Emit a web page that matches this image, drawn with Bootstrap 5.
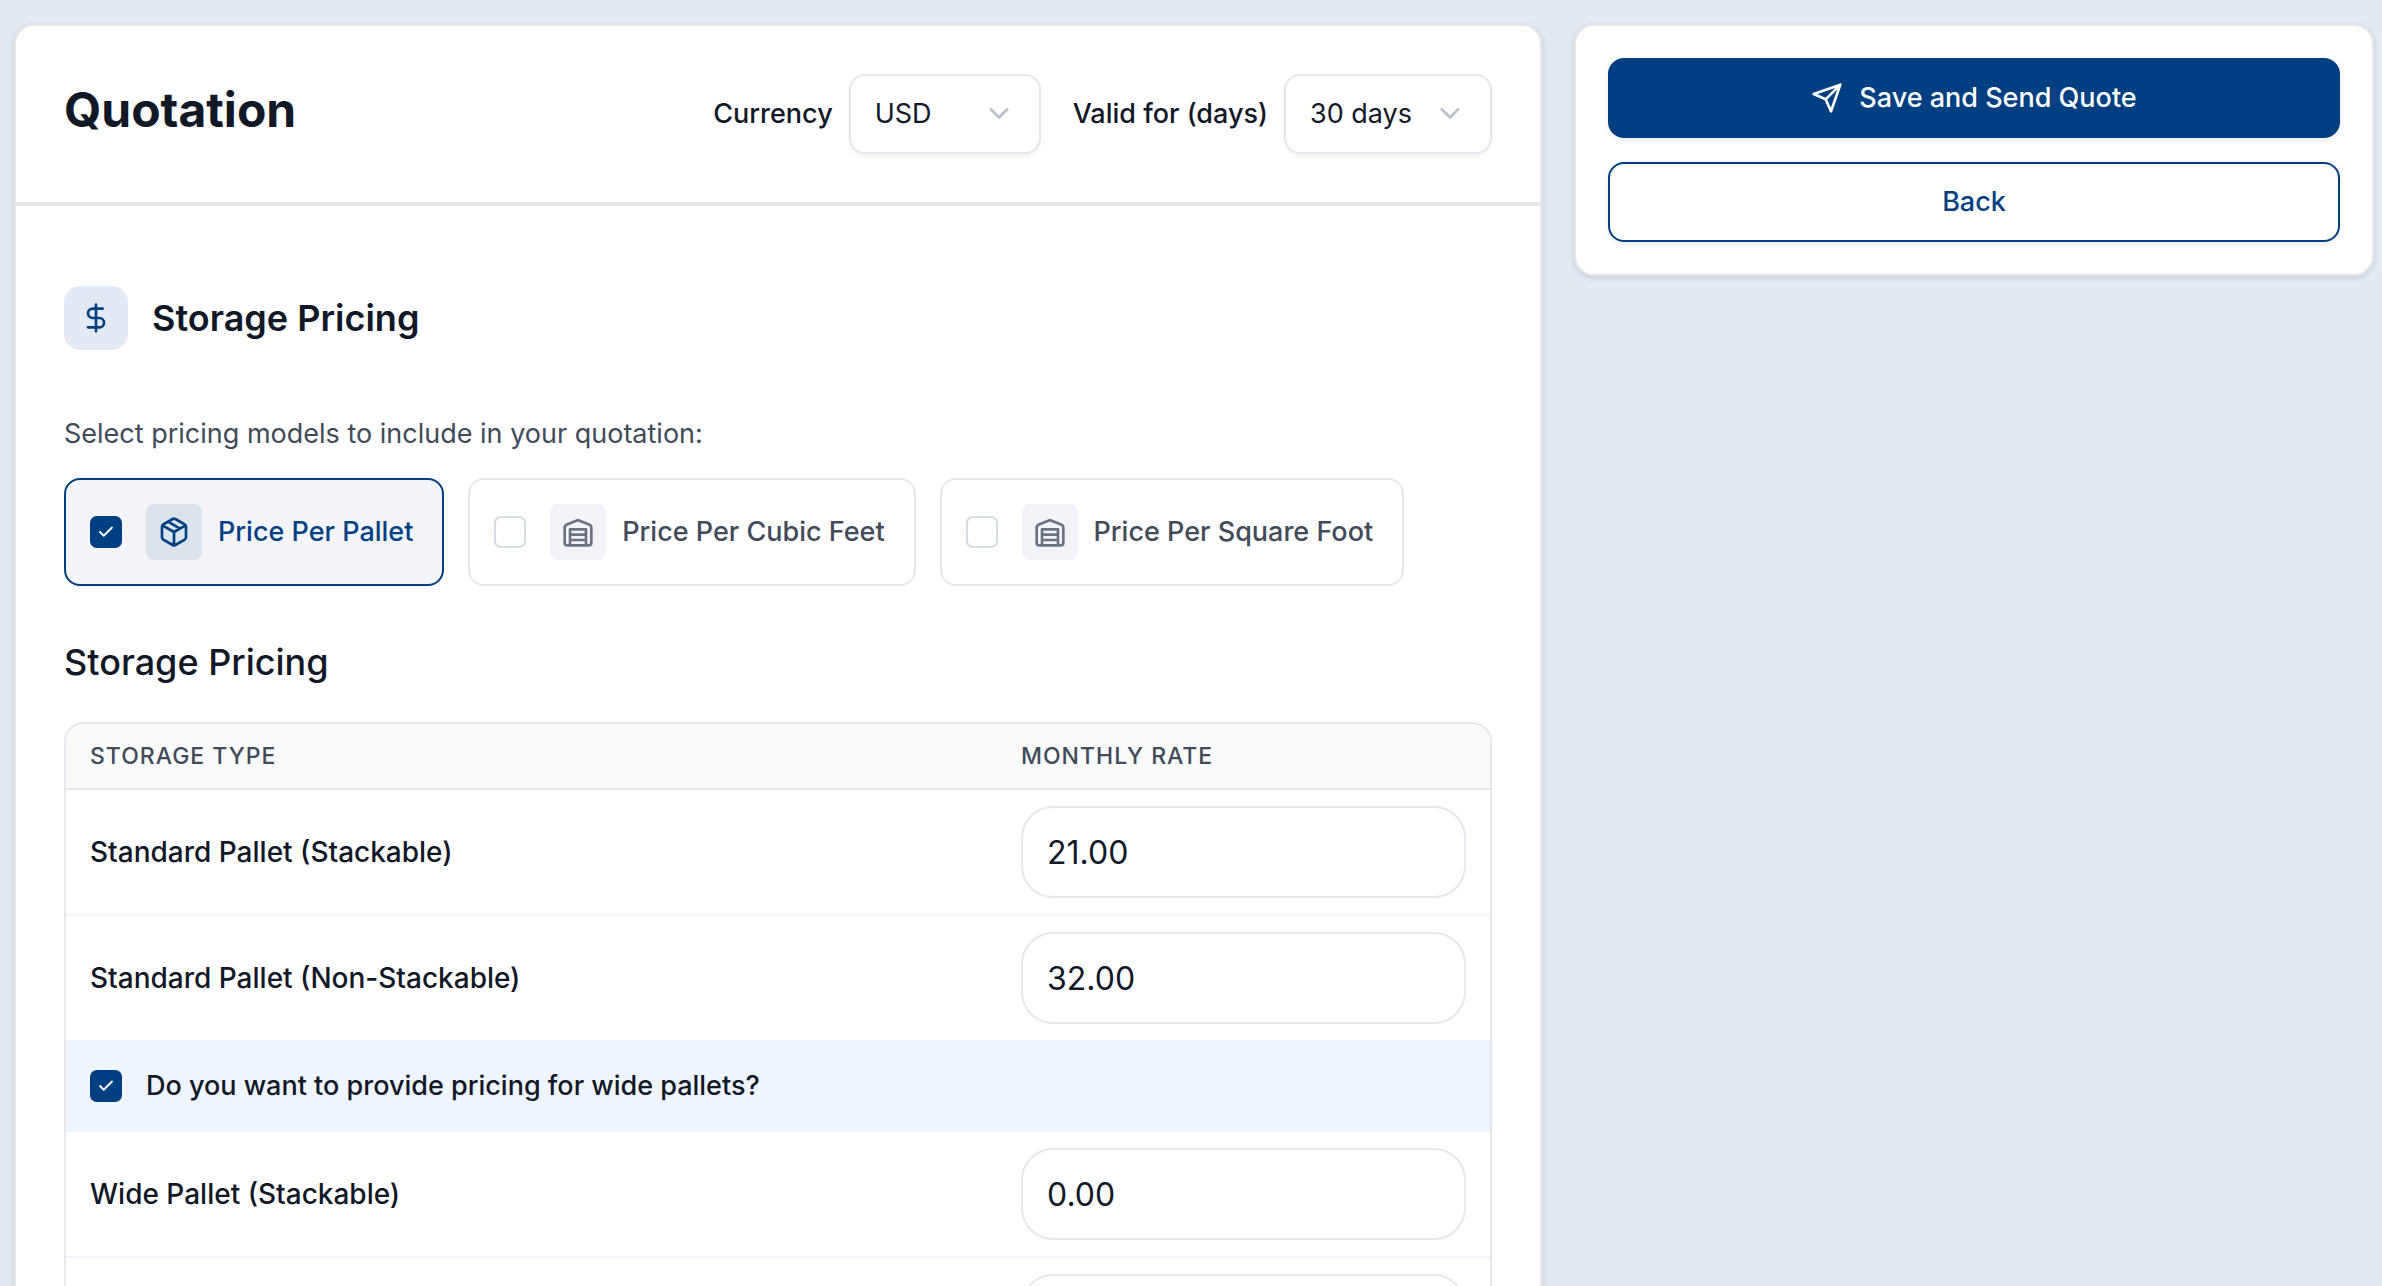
<!DOCTYPE html>
<html lang="en">
<head>
<meta charset="utf-8">
<meta name="viewport" content="width=device-width, initial-scale=1">
<title>Quotation</title>
<link href="https://cdn.jsdelivr.net/npm/bootstrap@5.3.0/dist/css/bootstrap.min.css" rel="stylesheet">
<style>
:root{--navy:#003f82;--ink:#111827;--slate:#414b5a;--line:#e5e7eb}
body{background:#e3eaf2;color:var(--ink);font-family:Inter,"Liberation Sans",sans-serif;font-size:28px;line-height:40px}
.page{display:grid;grid-template-columns:191fr 100fr;align-items:start;gap:32px;padding:24px 8px 24px 14px;height:100vh;overflow-y:auto;scrollbar-width:none}
.page::-webkit-scrollbar{display:none}
.panel{min-width:0;background:#fff;border:2px solid #e5e7ea;border-radius:20px;box-shadow:0 2px 6px rgba(30,50,80,.16)}
.panel-head{padding:48px;border-bottom:4px solid #e5e7ea}
h1{font-size:48px;line-height:72px;font-weight:700}
h2{font-size:36px;line-height:56px;font-weight:600}
h3{font-size:36px;line-height:56px;font-weight:500}
.fields{gap:32px}
.field{gap:16px}
.field label{font-size:27px;font-weight:500}
.form-select{height:80px;padding:0 72px 0 24px;border:2px solid var(--line);border-radius:16px;font-size:27px;line-height:40px;color:var(--ink);box-shadow:0 2px 4px rgba(0,0,0,.05);background-size:28px 28px;background-position:right 26px center;
background-image:url("data:image/svg+xml,%3Csvg xmlns='http://www.w3.org/2000/svg' viewBox='0 0 24 24' fill='none' stroke='%23bcc2cc' stroke-width='2.4' stroke-linecap='round' stroke-linejoin='round'%3E%3Cpath d='m5 8 7 7 7-7'/%3E%3C/svg%3E")}
.sel-currency{width:192px}
.sel-days{width:208px}
.panel-body{padding:80px 48px 48px}
.tile-lg{width:64px;height:64px;border-radius:16px;background:#e3eaf3;color:var(--navy)}
.tile-md{width:56px;height:56px;border-radius:8px;background:#f3f4f9;color:#6b7280;margin-right:16px}
.hint{margin:64px 0 24px;font-size:27px;color:var(--slate)}
.options{max-width:1340px}
.option{flex:1 1 auto;height:108px;padding:0 24px;border:2px solid var(--line);border-radius:16px;font-size:27px;font-weight:500;color:var(--slate);cursor:pointer;white-space:nowrap}
.option:has(:checked){border-color:var(--navy);background:#f3f5fa;color:var(--navy)}
.option:has(:checked) .tile-md{background:#dbe3eb;color:var(--navy)}
.form-check-input{width:32px;height:32px;margin:0 24px 0 0;border:2px solid #d5dce4;border-radius:8px;flex:none}
.form-check-input:checked{background-color:var(--navy);border-color:var(--navy)}
.form-check-input:checked[type=checkbox]{background-size:18px 18px;background-image:url("data:image/svg+xml,%3Csvg xmlns='http://www.w3.org/2000/svg' viewBox='0 0 24 24' fill='none' stroke='%23fff' stroke-width='2.4' stroke-linecap='round' stroke-linejoin='round'%3E%3Cpath d='M20 6 9 17l-5-5'/%3E%3C/svg%3E")}
.rates{border:2px solid var(--line);border-radius:20px;overflow:hidden}
.rates table{width:100%;table-layout:fixed;border-collapse:separate;border-spacing:0}
.rates th{font-size:23px;line-height:32px;font-weight:500;letter-spacing:1px;text-transform:uppercase;color:var(--slate);background:#f9fbfb;padding:16px 24px;border-bottom:2px solid var(--line)}
.rates td{padding:16px 24px;border-bottom:2px solid #f3f4f8;font-weight:500}
.rates .before-ask td{border-color:#eef5fe}
.rates .ask td{background:#eef5fe;padding:24px;border-color:#eef3fa;font-size:27px}
.rate-col{width:493px}
.rates .form-control{height:92px;border:2px solid var(--line);border-radius:32px;padding:0 24px;font-size:32px;color:var(--ink)}
.actions{padding:32px;gap:24px}
.actions .btn{height:80px;border-radius:16px;border:2px solid var(--navy);font-size:27px;font-weight:500;gap:16px;box-shadow:0 2px 6px rgba(0,0,0,.08)}
.btn-send,.btn-send:hover{background:var(--navy);color:#fff}
.btn-back,.btn-back:hover{background:#fff;color:var(--navy)}
svg{width:32px;height:32px;fill:none;stroke:currentColor;stroke-width:2;stroke-linecap:round;stroke-linejoin:round;flex:none}
</style>
</head>
<body>
<div class="page">
<main class="panel">
<header class="panel-head d-flex justify-content-between align-items-start">
<h1 class="m-0">Quotation</h1>
<div class="fields d-flex">
<div class="field d-flex align-items-center"><label class="text-nowrap" for="currency">Currency</label>
<select id="currency" class="form-select sel-currency"><option>USD</option></select></div>
<div class="field d-flex align-items-center"><label class="text-nowrap" for="days">Valid for (days)</label>
<select id="days" class="form-select sel-days"><option>30 days</option></select></div>
</div>
</header>
<section class="panel-body">
<div class="d-flex align-items-center gap-4">
<span class="tile-lg d-flex align-items-center justify-content-center"><svg viewBox="0 0 24 24" aria-hidden="true"><path d="M12 2v20M17 5H9.5a3.5 3.5 0 0 0 0 7h5a3.5 3.5 0 0 1 0 7H6"/></svg></span>
<h2 class="m-0">Storage Pricing</h2>
</div>
<p class="hint">Select pricing models to include in your quotation:</p>
<div class="options d-flex gap-4">
<label class="option d-flex align-items-center"><input class="form-check-input" type="checkbox" checked><span class="tile-md d-flex align-items-center justify-content-center"><svg viewBox="0 0 24 24" aria-hidden="true"><path d="M11 21.73a2 2 0 0 0 2 0l7-4A2 2 0 0 0 21 16V8a2 2 0 0 0-1-1.73l-7-4a2 2 0 0 0-2 0l-7 4A2 2 0 0 0 3 8v8a2 2 0 0 0 1 1.73zM12 22V12M3.3 7 12 12l8.7-5M7.5 4.27l9 5.15"/></svg></span>Price Per Pallet</label>
<label class="option d-flex align-items-center"><input class="form-check-input" type="checkbox"><span class="tile-md d-flex align-items-center justify-content-center"><svg viewBox="0 0 24 24" aria-hidden="true"><path d="M22 8.35V20a2 2 0 0 1-2 2H4a2 2 0 0 1-2-2V8.35A2 2 0 0 1 3.26 6.5l8-3.2a2 2 0 0 1 1.48 0l8 3.2A2 2 0 0 1 22 8.35ZM6 18h12M6 14h12M6 10h12v12H6z"/></svg></span>Price Per Cubic Feet</label>
<label class="option d-flex align-items-center"><input class="form-check-input" type="checkbox"><span class="tile-md d-flex align-items-center justify-content-center"><svg viewBox="0 0 24 24" aria-hidden="true"><path d="M22 8.35V20a2 2 0 0 1-2 2H4a2 2 0 0 1-2-2V8.35A2 2 0 0 1 3.26 6.5l8-3.2a2 2 0 0 1 1.48 0l8 3.2A2 2 0 0 1 22 8.35ZM6 18h12M6 14h12M6 10h12v12H6z"/></svg></span>Price Per Square Foot</label>
</div>
<h3 class="mt-5 mb-0 pb-2">Storage Pricing</h3>
<div class="rates mt-4">
<table>
<thead><tr><th scope="col">Storage Type</th><th scope="col" class="rate-col">Monthly Rate</th></tr></thead>
<tbody>
<tr><td><label for="r1">Standard Pallet (Stackable)</label></td><td><input id="r1" class="form-control" inputmode="decimal" value="21.00"></td></tr>
<tr class="before-ask"><td><label for="r2">Standard Pallet (Non-Stackable)</label></td><td><input id="r2" class="form-control" inputmode="decimal" value="32.00"></td></tr>
<tr class="ask"><td colspan="2"><label class="d-flex align-items-center"><input class="form-check-input" type="checkbox" checked>Do you want to provide pricing for wide pallets?</label></td></tr>
<tr><td><label for="r3">Wide Pallet (Stackable)</label></td><td><input id="r3" class="form-control" inputmode="decimal" value="0.00"></td></tr>
<tr><td></td><td><input class="form-control" inputmode="decimal" aria-label="Monthly rate"></td></tr>
</tbody>
</table>
</div>
</section>
</main>
<aside class="panel actions d-flex flex-column">
<button type="button" class="btn btn-send d-flex align-items-center justify-content-center"><svg viewBox="0 0 24 24" aria-hidden="true"><path d="m22 2-7 20-4-9-9-4ZM22 2 11 13"/></svg>Save and Send Quote</button>
<button type="button" class="btn btn-back">Back</button>
</aside>
</div>
<script src="https://cdn.jsdelivr.net/npm/bootstrap@5.3.0/dist/js/bootstrap.bundle.min.js"></script>
</body>
</html>
